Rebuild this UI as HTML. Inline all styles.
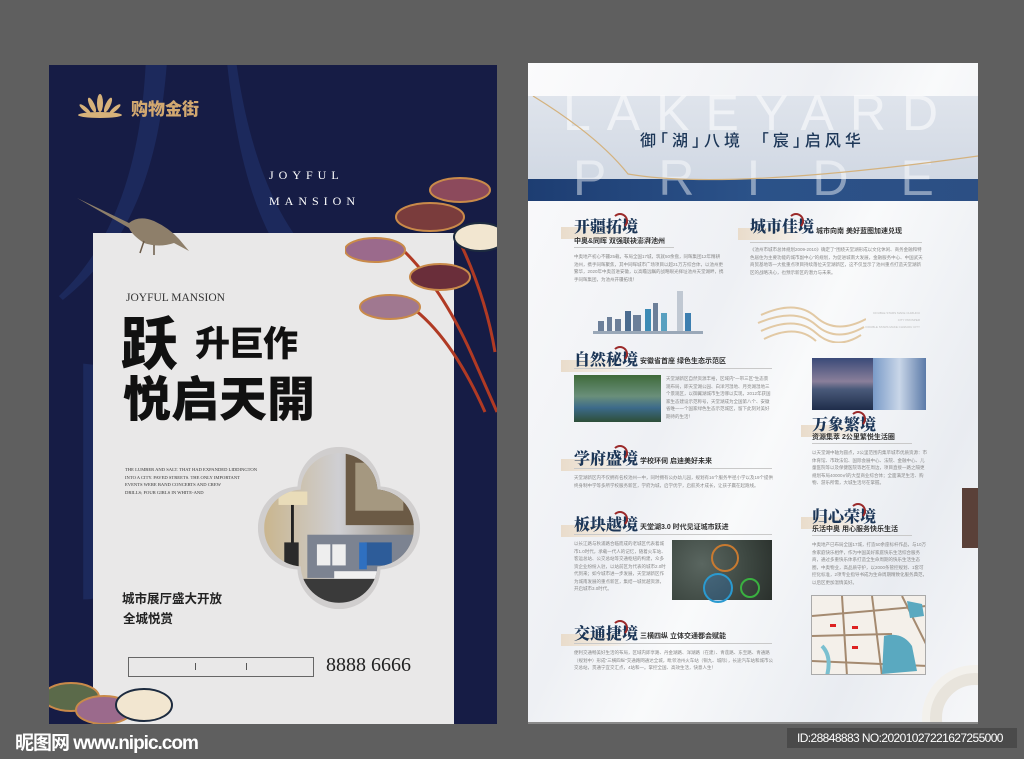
<!DOCTYPE html><html><head><meta charset="utf-8"><style>
*{margin:0;padding:0;box-sizing:border-box}
body{width:1024px;height:759px;background:#5f5f5f;position:relative;overflow:hidden;font-family:"Liberation Sans","Noto Sans CJK SC",sans-serif}
.a{position:absolute}
.cjk{font-family:"Liberation Sans","Noto Sans CJK SC",sans-serif}
.ser{font-family:"Liberation Serif","Noto Serif CJK SC",serif}
.tl{position:absolute;font-family:"Liberation Serif","Noto Serif CJK SC",serif;font-weight:900;color:#1c3657;font-size:16px;white-space:nowrap;letter-spacing:0}
.bar{position:absolute;height:12px;background:linear-gradient(90deg,#e9dccb,#f3ece3 70%,rgba(255,255,255,0))}
.sub{position:absolute;font-size:7px;font-weight:bold;color:#333;white-space:nowrap}
.ln{position:absolute;height:1px;background:#c9c9c9}
.tx{position:absolute;font-size:4.5px;line-height:7.5px;color:#888;overflow:hidden}
.ring{position:absolute;width:16px;height:16px;border-radius:50%;border:2px solid #9b2a2a;border-left-color:transparent;border-bottom-color:transparent}
</style></head><body>

<!-- LEFT POSTER -->
<div class="a" style="left:49px;top:65px;width:448px;height:659px;background:#161c45;overflow:hidden">
  <div class="a ser" style="left:0;top:-40px;font-size:300px;color:#1e2d62;line-height:1;opacity:.8">八门</div>
  <svg class="a" style="left:26px;top:28px" width="50" height="26" viewBox="0 0 50 26">
    <g fill="#d7b27a"><ellipse cx="25" cy="10" rx="3" ry="9"/><ellipse cx="17" cy="12" rx="2.5" ry="8" transform="rotate(-25 17 12)"/><ellipse cx="33" cy="12" rx="2.5" ry="8" transform="rotate(25 33 12)"/><ellipse cx="10" cy="16" rx="2" ry="7" transform="rotate(-50 10 16)"/><ellipse cx="40" cy="16" rx="2" ry="7" transform="rotate(50 40 16)"/><ellipse cx="25" cy="22" rx="22" ry="3"/></g></svg>
  <div class="a cjk" style="left:82px;top:30px;font-size:17px;font-weight:900;color:#d2a870">购物金街</div>
  <div class="a ser" style="left:220px;top:103px;font-size:12px;color:#fff;letter-spacing:5px">JOYFUL</div>
  <div class="a ser" style="left:220px;top:129px;font-size:12px;color:#fff;letter-spacing:5px">MANSION</div>
  <div class="a" style="left:44px;top:168px;width:361px;height:491px;background:#e9e8e8"></div>
  <svg class="a" style="left:25px;top:128px" width="120" height="70"><path d="M3 5 L55 30 Q65 22 80 28 Q95 35 105 46 L115 58 L100 50 Q85 55 70 50 Q58 42 55 35 Z" fill="#8e7f6a"/><path d="M70 48 l-4 12 M80 52 l0 10" stroke="#6a5a48" stroke-width="1.5"/></svg>
  <svg class="a" style="left:296px;top:107px" width="152" height="250">
    <g stroke="#b03a24" stroke-width="3" fill="none"><path d="M60 80 Q100 120 130 190 L152 240"/><path d="M110 60 Q140 120 150 180"/><path d="M50 125 Q100 150 140 240"/></g>
    <g stroke="#c98a4a" stroke-width="2"><ellipse cx="115" cy="18" rx="30" ry="12" fill="#8c4a5c"/><ellipse cx="85" cy="45" rx="34" ry="14" fill="#7a3c3c"/><ellipse cx="135" cy="65" rx="26" ry="14" fill="#f2e6d0" stroke="#1d2b3f"/><ellipse cx="30" cy="78" rx="30" ry="12" fill="#9b6a8c"/><ellipse cx="95" cy="105" rx="30" ry="13" fill="#6a2e3a"/><ellipse cx="45" cy="135" rx="30" ry="12" fill="#a07890"/></g>
  </svg>
  <svg class="a" style="left:0;top:610px" width="130" height="49"><g stroke="#c98a4a" stroke-width="2"><ellipse cx="22" cy="22" rx="28" ry="14" fill="#5b6a4a"/><ellipse cx="55" cy="35" rx="28" ry="14" fill="#9b6a8c"/><ellipse cx="95" cy="30" rx="28" ry="16" fill="#f2e6d0" stroke="#1d2b3f"/></g></svg>
  <div class="a ser" style="left:77px;top:227px;font-size:11.5px;color:#333">JOYFUL MANSION</div>
  <div class="a cjk" style="left:72px;top:252px;font-size:57px;font-weight:900;color:#111;line-height:1">跃</div>
  <div class="a cjk" style="left:146px;top:262px;font-size:35px;font-weight:900;color:#111;line-height:1;letter-spacing:-1px">升巨作</div>
  <div class="a cjk" style="left:74px;top:312px;font-size:48px;font-weight:900;color:#111;letter-spacing:0;line-height:1">悦启天開</div>
  <div class="a ser" style="left:76px;top:401px;font-size:4.6px;line-height:7.6px;color:#333;width:190px">THE LUMBER AND SALT. THAT HAD EXPANDED LIDDINGTON<br>INTO A CITY. PAVED STREETS. THE ONLY IMPORTANT<br>EVENTS WERE BAND CONCERTS AND CREW<br>DRILLS; FOUR GIRLS IN WHITE-AND</div>
  <svg class="a" style="left:207px;top:380px" width="166" height="166" viewBox="0 0 166 166">
    <defs><clipPath id="q"><circle cx="83" cy="45" r="40"/><circle cx="83" cy="121" r="40"/><circle cx="45" cy="83" r="40"/><circle cx="121" cy="83" r="40"/><rect x="45" y="45" width="76" height="76"/></clipPath>
    <linearGradient id="rm" x1="0" y1="0" x2="1" y2="0"><stop offset="0" stop-color="#c9b48a"/><stop offset=".5" stop-color="#cfcfd3"/><stop offset="1" stop-color="#8a8070"/></linearGradient></defs>
    <g transform="translate(83 83) scale(1.04) translate(-83 -83)"><g clip-path="url(#q)"><rect width="166" height="166" fill="#d0cece"/></g></g>
    <g clip-path="url(#q)" transform="translate(83 83) scale(.96) translate(-83 -83)">
      <rect width="166" height="166" fill="url(#rm)"/>
      <rect x="90" y="5" width="75" height="75" fill="#6b5a45"/><rect x="100" y="15" width="50" height="50" fill="#a59880"/>
      <rect x="20" y="45" width="30" height="14" fill="#e9dcb9"/><rect x="33" y="59" width="3" height="40" fill="#222"/><rect x="26" y="98" width="15" height="30" fill="#2a2a2a"/>
      <rect x="50" y="90" width="116" height="45" fill="#7c8391"/><rect x="60" y="100" width="14" height="22" fill="#eee"/><rect x="76" y="100" width="14" height="22" fill="#eee"/><rect x="110" y="98" width="28" height="24" fill="#2d5c99"/>
      <rect x="104" y="98" width="8" height="28" fill="#2f70c0"/>
      <rect x="78" y="128" width="60" height="8" fill="#f0f0f0"/><rect x="0" y="136" width="166" height="30" fill="#3a3a3a"/>
    </g>
  </svg>
  <div class="a cjk" style="left:73px;top:523px;font-size:12.5px;font-weight:bold;color:#222">城市展厅盛大开放</div>
  <div class="a cjk" style="left:74px;top:543px;font-size:12.5px;font-weight:bold;color:#222">全城悦赏</div>
  <div class="a" style="left:79px;top:592px;width:186px;height:20px;border:1px solid #666"></div>
  <div class="a" style="left:146px;top:598px;width:1px;height:7px;background:#555"></div>
  <div class="a" style="left:197px;top:598px;width:1px;height:7px;background:#555"></div>
  <div class="a ser" style="left:277px;top:589px;font-size:20px;color:#222">8888 6666</div>
</div>

<!-- RIGHT POSTER -->
<div class="a" style="left:528px;top:63px;width:450px;height:659px;background:linear-gradient(115deg,#fbfbfc 0%,#eef0f4 40%,#f9fafb 55%,#e9ecf1 80%,#f6f7f9 100%);overflow:hidden">
  <div class="a" style="left:0;top:33px;width:450px;height:105px;background:linear-gradient(180deg,#dfe4ec,#cdd5e1)"></div>
  <div class="a" style="left:0;top:116px;width:450px;height:22px;background:linear-gradient(90deg,#1d3d72,#2b5289 50%,#2c4f84)"></div>
  <div class="a" style="left:35px;top:25px;font-size:50px;color:rgba(255,255,255,.55);letter-spacing:16px;line-height:1">LAKEYARD</div>
  <div class="a" style="left:45px;top:90px;font-size:50px;color:rgba(255,255,255,.45);letter-spacing:52px;line-height:1">PRIDE</div>
  <svg class="a" style="left:0;top:33px" width="450" height="85"><path d="M5 0 Q70 40 100 78 Q200 95 450 60" stroke="#d4b27e" stroke-width="1.2" fill="none"/></svg>
  <div class="a cjk" style="left:112px;top:64px;font-size:16px;color:#1c3657;letter-spacing:4px;font-weight:500">御｢湖｣八境&nbsp;&nbsp;｢宸｣启风华</div>

  <div class="bar" style="left:33px;top:164px;width:70px"></div>
  <div class="tl" style="left:46px;top:151px">开疆拓境</div><div class="ring" style="left:84px;top:150px"></div>
  <div class="sub" style="left:46px;top:173px">中奥&同晖 双强联袂澎湃池州</div>
  <div class="ln" style="left:46px;top:184px;width:100px"></div>
  <div class="tx" style="left:46px;top:190px;width:150px">中奥地产初心不疆25载，布局全国17城，筑就50余盘，同晖集团12年精耕池州，携手同晖聚焦，其中同晖城市广场项目以超21万方综合体，以池州更繁华，2020年中奥首进安徽，以高瞻远瞩的战略眼光择址池州天堂湖畔，携手同晖集团，为池州开疆拓境！</div>
  <svg class="a" style="left:65px;top:228px" width="110" height="50"><g fill="#6c7f99"><rect x="5" y="30" width="6" height="12"/><rect x="14" y="26" width="5" height="16"/><rect x="22" y="28" width="6" height="14"/><rect x="32" y="20" width="6" height="22" fill="#4a6b8f"/><rect x="40" y="24" width="8" height="18"/><rect x="52" y="18" width="6" height="24" fill="#3d8bb5"/><rect x="60" y="12" width="5" height="30"/><rect x="68" y="22" width="6" height="20" fill="#58a0c0"/><rect x="84" y="0" width="6" height="42" fill="#c0c8d2"/><rect x="92" y="22" width="6" height="20" fill="#3d7fb0"/><rect x="0" y="40" width="110" height="3" fill="#9aa8b8"/></g></svg>

  <div class="bar" style="left:210px;top:165px;width:70px"></div>
  <div class="tl" style="left:222px;top:151px">城市佳境</div><div class="ring" style="left:260px;top:150px"></div>
  <div class="sub" style="left:288px;top:163px">城市向南 美好蓝图加速兑现</div>
  <div class="ln" style="left:222px;top:179px;width:172px"></div>
  <div class="tx" style="left:222px;top:183px;width:175px">《池州市城市总体规划2009-2010》确定了"围绕天堂湖形成以文化休闲、商务金融和特色居住为主要功能的城市副中心"的规划，为促进城南大发展，金融服务中心、中国武天商贸基地等一大批重点项目持续落位天堂湖新区，这不仅显示了池州重点打造天堂湖新区的战略决心，也预示新区的潜力与未来。</div>
  <svg class="a" style="left:228px;top:240px" width="110" height="40"><g stroke="#e2c9a4" stroke-width="2" fill="none"><path d="M5 12 Q40 -4 60 14 T110 16"/><path d="M2 20 Q40 4 60 22 T108 24"/><path d="M5 28 Q40 12 60 30 T105 32"/><path d="M8 36 Q40 20 60 38"/></g></svg>
  <div class="tx" style="left:322px;top:247px;width:70px;font-size:3px;line-height:7px;color:#bbb;text-align:right">DOUBLE STARS MAKE CHIZHOU<br>CITY PROSPER<br>DOUBLE STARS MAKE CHIZHOU CITY</div>

  <div class="bar" style="left:33px;top:297px;width:70px"></div>
  <div class="tl" style="left:46px;top:284px">自然秘境</div><div class="ring" style="left:84px;top:283px"></div>
  <div class="sub" style="left:112px;top:293px">安徽省首座 绿色生态示范区</div>
  <div class="ln" style="left:46px;top:305px;width:198px"></div>
  <div class="a" style="left:46px;top:312px;width:87px;height:47px;background:linear-gradient(180deg,#3f6a3a 0%,#6a8f7a 45%,#3c6a8a 70%,#2e4e38 100%)"></div>
  <div class="tx" style="left:138px;top:312px;width:105px">天堂湖新区自然资源丰裕，区域内"一带三区"生态景观布局，即天堂湖公园、白洋河湿地、月亮湖湿地三个景观区，以御翼湖城市生活哪以实现，2012年获国家生态建设示范称号，天堂湖成为全国第八个、安徽省唯一一个国家绿色生态示范城区，留下此刻对美好期待的生活！</div>
  <div class="a" style="left:284px;top:295px;width:114px;height:52px;background:linear-gradient(180deg,#3a4a78 0%,#8a7f9a 45%,#4a5a7a 60%,#1f2d4a 100%)"></div>
  <div class="a" style="left:345px;top:295px;width:53px;height:52px;background:linear-gradient(90deg,#7a9bc8,#c9d6e8,#5b7aa8)"></div>

  <div class="bar" style="left:273px;top:362px;width:65px"></div>
  <div class="tl" style="left:284px;top:349px">万象繁境</div><div class="ring" style="left:322px;top:348px"></div>
  <div class="sub" style="left:284px;top:369px">资源集萃 2公里繁悦生活圈</div>
  <div class="ln" style="left:284px;top:380px;width:100px"></div>
  <div class="tx" style="left:284px;top:386px;width:115px">以天堂湖中轴为圆点，2公里范围内集萃城市优质资源：市体育馆、市政法馆、国际会展中心、法院、金融中心、儿童医院等以及保健医院等岩在周边，项目直接一路之隔更规划布局40000㎡的大型商业综合体；全面满足生活、购物、游乐所需，大城生活尽在掌握。</div>

  <div class="bar" style="left:33px;top:396px;width:70px"></div>
  <div class="tl" style="left:46px;top:383px">学府盛境</div><div class="ring" style="left:84px;top:382px"></div>
  <div class="sub" style="left:112px;top:393px">学校环伺 启迪美好未来</div>
  <div class="ln" style="left:46px;top:405px;width:198px"></div>
  <div class="tx" style="left:46px;top:411px;width:200px">天堂湖新区内不仅拥有名校池州一中，同时拥有公办幼儿园，规划有16个服务半径小学以及19个提供终身制中学等多所学校服务新区，学府为城，启学优学，启航英才成长，让孩子赢在起跑线。</div>

  <div class="bar" style="left:33px;top:462px;width:70px"></div>
  <div class="tl" style="left:46px;top:449px">板块越境</div><div class="ring" style="left:84px;top:448px"></div>
  <div class="sub" style="left:112px;top:459px">天堂湖3.0 时代见证城市跃进</div>
  <div class="ln" style="left:46px;top:471px;width:198px"></div>
  <div class="tx" style="left:46px;top:477px;width:93px">以长江路与秋浦路合临而成的老城区代表着城市1.0时代，承载一代人的记忆，随着火车站、客运总站、公交总站等交通枢纽的构建，众多资企业纷纷入驻，以站前区为代表的城市2.0时代到来；如今城市进一步发展，天堂湖新区作为城南发展的重点新区，集结一城优越资源，开启城市3.0时代。</div>
  <div class="a" style="left:144px;top:477px;width:100px;height:60px;background:radial-gradient(circle at 30% 40%,#5a6660,#3c4640 60%,#2a302c)"></div>
  <div class="a" style="left:183px;top:481px;width:28px;height:28px;border-radius:50%;border:2px solid #c87a30"></div>
  <div class="a" style="left:175px;top:510px;width:30px;height:30px;border-radius:50%;border:2px solid #2a9ad0;background:rgba(40,120,200,.3)"></div>
  <div class="a" style="left:212px;top:515px;width:20px;height:20px;border-radius:50%;border:2px solid #3ab040"></div>

  <div class="bar" style="left:273px;top:454px;width:65px"></div>
  <div class="tl" style="left:284px;top:441px">归心荣境</div><div class="ring" style="left:322px;top:440px"></div>
  <div class="sub" style="left:284px;top:461px">乐活中奥 用心服务快乐生活</div>
  <div class="ln" style="left:284px;top:472px;width:100px"></div>
  <div class="tx" style="left:284px;top:478px;width:115px">中奥地产已布局全国17城，打造50余座标杆作品，与10万余家庭快乐相伴，作为中国美好家庭快乐生活综合服务商，通过多重快乐体系打造全生命周期的快乐生活生态圈，中奥物业，高品质守护，以2000条管控规划、1套可控化标准，2项专业指导书成为生命周期精致化服务典范，以后区更加温情美好。</div>
  <div class="a" style="left:283px;top:532px;width:115px;height:80px;background:#f4f0ea;border:1px solid #aaa;overflow:hidden">
    <svg width="115" height="80"><g stroke="#a48a70" stroke-width="2" fill="none"><path d="M0 20 L115 10"/><path d="M0 40 L80 38"/><path d="M30 0 L35 80"/><path d="M60 0 L70 80"/><path d="M0 65 L115 70"/><path d="M90 0 L115 50"/></g><path d="M72 40 Q90 35 100 50 L105 75 L70 78 Z" fill="#5aa9c0"/><path d="M95 5 L110 8 L112 20 L98 22Z" fill="#5aa9c0"/><path d="M10 50 Q20 60 15 80" stroke="#7ac0d0" stroke-width="4" fill="none"/><g fill="#d22"><rect x="18" y="28" width="6" height="3"/><rect x="40" y="30" width="6" height="3"/><rect x="40" y="50" width="6" height="3"/></g></svg>
  </div>

  <div class="bar" style="left:33px;top:571px;width:70px"></div>
  <div class="tl" style="left:46px;top:558px">交通捷境</div><div class="ring" style="left:84px;top:557px"></div>
  <div class="sub" style="left:112px;top:568px">三横四纵 立体交通都会赋能</div>
  <div class="ln" style="left:46px;top:580px;width:198px"></div>
  <div class="tx" style="left:46px;top:586px;width:200px">便利交通畅美好生活的布局，区域内即享路、丹金湖路、洋湖路（在建）、青莲路、东至路、青通路（规划中）形成"三横四纵"交通路网通达全城，毗邻池州火车站（铜九、城际），长途汽车站和城市公交总站，贯通宁宜交汇点，4站和一。掌控全国、高效生活，快意人生！</div>
  <div class="a" style="left:402px;top:610px;width:90px;height:90px;border-radius:50%;border:12px solid #e8e4dc;box-shadow:0 0 0 8px #f3f1ec"></div>
</div>
<div class="a" style="left:528px;top:722px;width:450px;height:2px;background:#8a8a8a"></div>
<div class="a" style="left:962px;top:488px;width:16px;height:60px;background:#5a4038"></div>

<div class="a cjk" style="left:15px;top:728px;font-size:19px;font-weight:bold;color:#fff;letter-spacing:-1px">昵图网 www.nipic.com</div>
<div class="a" style="left:787px;top:728px;width:230px;height:20px;background:#4a4a4a;color:#fff;font-size:12px;line-height:20px;padding-left:10px;white-space:nowrap;letter-spacing:-.6px">ID:28848883 NO:20201027221627255000</div>
</body></html>
